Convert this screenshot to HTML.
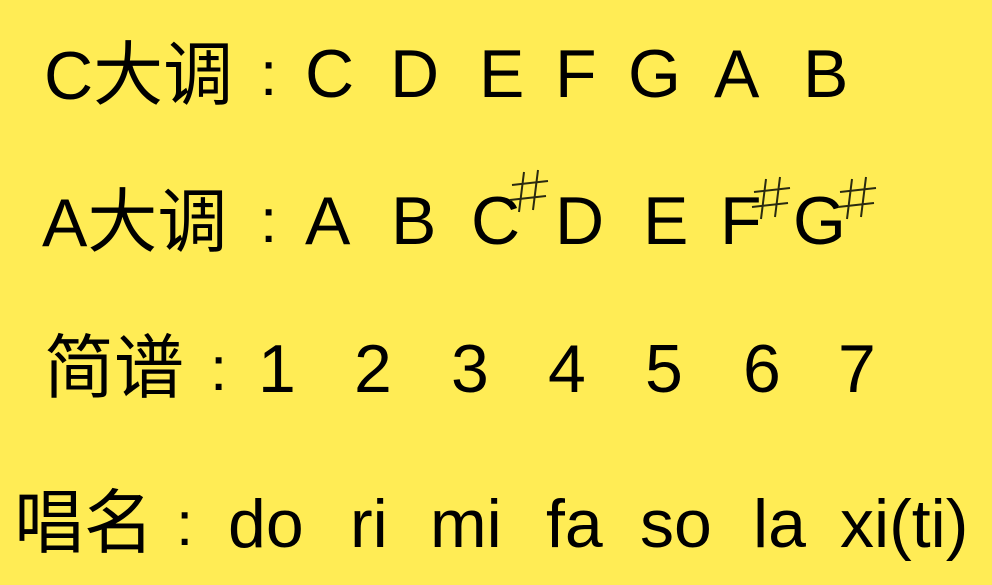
<!DOCTYPE html>
<html><head><meta charset="utf-8"><style>
body{margin:0;width:992px;height:585px;background:#FFEC55;overflow:hidden;position:relative;font-family:"Liberation Sans","Noto Sans CJK SC",sans-serif;color:#000}
span{position:absolute;font-size:68px;line-height:1;white-space:nowrap}
span.c{font-size:62px}
span.k{font-size:70px}
svg{position:absolute;left:0;top:0}
</style></head><body>
<span style="left:44px;top:40px">C<span class="k" style="position:static">大调</span></span><span class="c" style="left:260px;top:44px">:</span>
<span style="left:305px;top:40px">C</span><span style="left:390px;top:40px">D</span><span style="left:479px;top:40px">E</span><span style="left:555px;top:40px">F</span><span style="left:628px;top:40px">G</span><span style="left:714px;top:40px">A</span><span style="left:803px;top:40px">B</span>

<span style="left:42px;top:187px">A<span class="k" style="position:static">大调</span></span><span class="c" style="left:260px;top:191px">:</span>
<span style="left:305px;top:187px">A</span><span style="left:391px;top:187px">B</span><span style="left:471px;top:187px">C</span><span style="left:555px;top:187px">D</span><span style="left:643px;top:187px">E</span><span style="left:720px;top:187px">F</span><span style="left:793px;top:187px">G</span>

<span class="k" style="left:44px;top:333px">简谱</span><span class="c" style="left:210px;top:339px">:</span>
<span style="left:258px;top:335px">1</span><span style="left:354px;top:335px">2</span><span style="left:451px;top:335px">3</span><span style="left:548px;top:335px">4</span><span style="left:645px;top:335px">5</span><span style="left:743px;top:335px">6</span><span style="left:838px;top:335px">7</span>

<span class="k" style="left:14px;top:488px">唱名</span><span class="c" style="left:176px;top:494px">:</span>
<span style="left:228px;top:490px">do</span><span style="left:350px;top:490px">ri</span><span style="left:430px;top:490px">mi</span><span style="left:546px;top:490px">fa</span><span style="left:640px;top:490px">so</span><span style="left:753px;top:490px">la</span><span style="left:840px;top:490px">xi(ti)</span>

<svg width="992" height="585" stroke="#2a2a10" stroke-width="2" fill="none">
<g transform="translate(510,170)"><path d="M14 2 L9 42 M28 0 L23 40 M2 15 L38 11 M0 30 L36 26"/></g>
<g transform="translate(752,177)"><path d="M14 2 L9 42 M28 0 L23 40 M2 15 L38 11 M0 30 L36 26"/></g>
<g transform="translate(838,177)"><path d="M14 2 L9 42 M28 0 L23 40 M2 15 L38 11 M0 30 L36 26"/></g>
</svg>
</body></html>
